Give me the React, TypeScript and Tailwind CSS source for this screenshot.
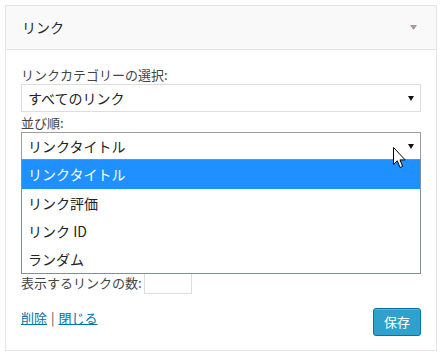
import * as React from 'react';

const font = { fontFamily: '"Noto Sans CJK JP", "Noto Sans", sans-serif' };

const Caret: React.FC = () => (
  <svg width="6" height="5" viewBox="0 0 6 5" className="shrink-0">
    <polygon points="0,0 6,0 3,5" fill="#111" />
  </svg>
);

const Cursor: React.FC = () => (
  <svg
    width="13"
    height="23"
    viewBox="0 0 13 23"
    className="absolute left-[372px] top-[15px] z-20"
  >
    <path
      d="M0.5 0.5 L0.5 17.5 L4.3 13.8 L7 20.5 L9.6 19.4 L7 12.9 L12.2 12.9 Z"
      fill="#fff"
      stroke="#000"
      strokeWidth="1"
      strokeLinejoin="miter"
    />
  </svg>
);

const options = ['リンクタイトル', 'リンク評価', 'リンク ID', 'ランダム'];

export default function App() {
  return (
    <div className="min-h-screen bg-white pt-[5px] px-[5px]" style={font}>
      <div className="w-[432px] border border-[#e5e5e5] bg-white">
        <div className="h-[44px] bg-[#f9f9f9] border-b border-[#e5e5e5] flex items-center justify-between pl-[16px] pr-[19px]">
          <span className="text-[14px] text-[#23282d] leading-[20px] mt-[-1px]">リンク</span>
          <svg width="7" height="5" viewBox="0 0 7 5">
            <polygon points="0,0 7,0 3.5,5" fill="#a8979f" />
          </svg>
        </div>

        <div className="px-[15px] pt-[16px] pb-[14px] text-[#444]">
          <div className="text-[13px] leading-[18px]">リンクカテゴリーの選択:</div>
          <div className="h-[28px] border border-[#ddd] flex items-center justify-between pl-[6px] pr-[6px] text-[14px] text-[#222]">
            <span>すべてのリンク</span>
            <Caret />
          </div>

          <div className="text-[13px] leading-[19px] mt-[1px]">並び順:</div>
          <div className="relative">
            <div className="h-[28px] border border-[#9e9e9e] flex items-center justify-between pl-[6px] pr-[6px] text-[14px] text-[#222]">
              <span>リンクタイトル</span>
              <Caret />
            </div>
            <Cursor />
            <div className="absolute left-0 right-0 top-[27px] z-10 h-[115px] border border-[#7f8ea3] bg-white">
              {options.map((o, i) => (
                <div
                  key={o}
                  className={
                    i === 0
                      ? 'h-[29px] flex items-center pl-[6px] text-[14px] bg-[#1e90ff] text-white'
                      : 'h-[28px] flex items-center pl-[6px] text-[14px] text-[#222]'
                  }
                >
                  {o}
                </div>
              ))}
            </div>
          </div>

          <div className="h-[108px]" />

          <div className="flex items-center gap-[2px] h-[26px]">
            <span className="text-[13px] leading-[18px] mt-[4px]">表示するリンクの数:</span>
            <div className="w-[48px] h-[26px] border border-[#ddd] bg-white" />
          </div>

          <div className="flex justify-between items-start mt-[14px]">
            <div className="text-[13px] leading-[18px] mt-[1px]">
              <a href="#" className="text-[#0073aa] underline">削除</a>
              <span className="text-[#555] mx-[4px]">|</span>
              <a href="#" className="text-[#0073aa] underline">閉じる</a>
            </div>
            <button className="h-[28px] px-[10px] bg-[#2ea2cc] border border-[#0074a2] rounded-[3px] text-white text-[13px] leading-[18px] shadow-[inset_0_1px_0_rgba(120,200,230,0.5)]">
              保存
            </button>
          </div>
        </div>
      </div>
    </div>
  );
}
